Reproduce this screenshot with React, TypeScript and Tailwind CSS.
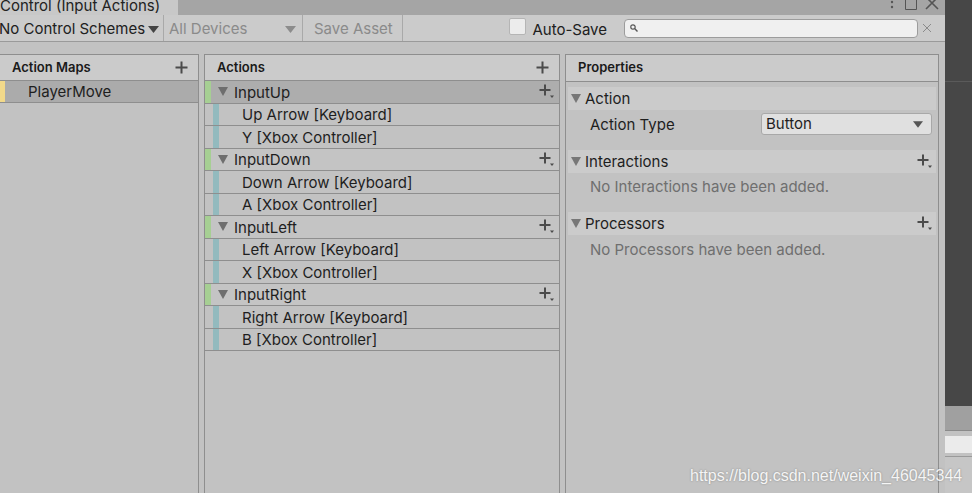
import React from 'react';

type Binding = { name: string };
type Action = { name: string; selected?: boolean; bindings: Binding[] };

const ACTIONS: Action[] = [
  { name: 'InputUp', selected: true, bindings: [{ name: 'Up Arrow [Keyboard]' }, { name: 'Y [Xbox Controller]' }] },
  { name: 'InputDown', bindings: [{ name: 'Down Arrow [Keyboard]' }, { name: 'A [Xbox Controller]' }] },
  { name: 'InputLeft', bindings: [{ name: 'Left Arrow [Keyboard]' }, { name: 'X [Xbox Controller]' }] },
  { name: 'InputRight', bindings: [{ name: 'Right Arrow [Keyboard]' }, { name: 'B [Xbox Controller]' }] },
];

const Plus = () => (
  <svg width="13" height="13" viewBox="0 0 13 13" className="shrink-0">
    <path d="M6.5 0.5v12M0.5 6.5h12" stroke="#4b4b4b" strokeWidth="2" />
  </svg>
);

// plus with the tiny dropdown caret under its right arm
const PlusMenu = () => (
  <svg width="15" height="15" viewBox="0 0 15 15" className="shrink-0">
    <path d="M6 0.5v11M0.5 6h11" stroke="#4b4b4b" strokeWidth="2" />
    <path d="M11 11.5h4l-2 2.5z" fill="#4b4b4b" />
  </svg>
);

const Tri = ({ color = '#6e6e6e' }: { color?: string }) => (
  <svg width="10" height="9" viewBox="0 0 10 9" className="shrink-0">
    <path d="M0 0h10L5 9z" fill={color} />
  </svg>
);

const Caret = ({ color = '#555', w = 11 }: { color?: string; w?: number }) => (
  <svg width={w} height="7" viewBox="0 0 11 7" className="shrink-0">
    <path d="M0 0h11L5.5 7z" fill={color} />
  </svg>
);

const PanelHeader = ({ title, plus }: { title: string; plus?: boolean }) => (
  <div className="h-[26px] flex items-center justify-between pl-[12px] pr-[10px] bg-[#cbcbcb] border-b border-[#8e8e8e] text-[13px] font-semibold text-[#1a1a1a]">
    <span>{title}</span>
    {plus && <Plus />}
  </div>
);

const Foldout = ({ title, plus }: { title: string; plus?: boolean }) => (
  <div className="h-[23px] flex items-center bg-[#cbcbcb] pl-[3px] pr-[4px] text-[15px] text-[#1e1e1e]">
    <Tri color="#777" />
    <span className="ml-[4px] flex-1 pt-[1px]">{title}</span>
    {plus && <PlusMenu />}
  </div>
);

export default function App() {
  return (
    <div className="relative w-[972px] h-[493px] flex bg-[#474747] overflow-hidden font-['Inter',sans-serif] text-[#1e1e1e]">
      {/* editor window */}
      <div className="w-[945px] h-full flex flex-col bg-[#c2c2c2]">
        {/* tab strip */}
        <div className="h-[15px] flex bg-[#a5a5a5]">
          <div className="w-[178px] bg-[#c8c8c8] text-[15px] leading-[11px] text-[#222] whitespace-nowrap overflow-hidden">
            Control (Input Actions)
          </div>
          <div className="flex-1" />
          <div className="flex items-start pr-[6px]">
            <svg width="4" height="10" viewBox="0 0 4 10"><circle cx="2" cy="2" r="1.2" fill="#555" /><circle cx="2" cy="7" r="1.2" fill="#555" /></svg>
            <svg width="12" height="10" viewBox="0 0 12 10" className="ml-[11px]"><path d="M0.5 -2h11v11.5h-11z" fill="none" stroke="#555" /></svg>
            <svg width="14" height="10" viewBox="0 0 14 10" className="ml-[8px]"><path d="M1 -3l12 12M13 -3L1 9" stroke="#555" strokeWidth="1.6" /></svg>
          </div>
        </div>

        {/* toolbar */}
        <div className="h-[27px] flex items-center bg-[#cbcbcb] border-b border-[#9a9a9a] text-[15px]">
          <div className="w-[164px] h-full flex items-center justify-between pt-[2px] pr-[4px] border-r border-[#a9a9a9] text-[#202020]">
            <span className="-ml-[1px]">No Control Schemes</span>
            <Caret color="#444" />
          </div>
          <div className="w-[139px] h-full flex items-center justify-between pt-[2px] pl-[5px] pr-[6px] border-r border-[#a9a9a9] text-[#8a8a8a]">
            <span>All Devices</span>
            <Caret color="#8c8c8c" />
          </div>
          <div className="w-[100px] h-full flex items-center pt-[2px] pl-[11px] border-r border-[#a9a9a9] text-[#8a8a8a]">
            Save Asset
          </div>
          <div className="flex-1" />
          <div className="w-[17px] h-[17px] rounded-[2px] bg-[#ececec] border border-[#b5b5b5] mb-[4px]" />
          <span className="ml-[6px] mr-[17px] mt-[4px] text-[#202020]">Auto-Save</span>
          <div className="w-[294px] h-[19px] rounded-[4px] bg-[#f0f0f0] border border-[#9c9c9c] flex items-center pl-[5px]">
            <svg width="8" height="8" viewBox="0 0 8 8"><circle cx="3" cy="3" r="2.2" fill="none" stroke="#555" strokeWidth="1.2" /><path d="M4.6 4.6L7.5 7.5" stroke="#555" strokeWidth="1.4" /></svg>
          </div>
          <svg width="10" height="10" viewBox="0 0 10 10" className="ml-[4px] mr-[13px]"><path d="M1 1l8 8M9 1L1 9" stroke="#8a8a8a" strokeWidth="1" /></svg>
        </div>

        {/* panels */}
        <div className="flex-1 flex pt-[12px]">
          {/* action maps */}
          <div className="w-[199px] flex flex-col border-t border-r border-[#8e8e8e]">
            <PanelHeader title="Action Maps" plus />
            <div className="h-[22px] flex items-center bg-[#ababab] border-b border-[#8e8e8e] text-[15px]">
              <div className="w-[5px] h-full bg-[#f2d98a]" />
              <span className="ml-[23px] pt-[2px]">PlayerMove</span>
            </div>
          </div>

          {/* actions */}
          <div className="ml-[5px] w-[356px] flex flex-col border-t border-l border-r border-[#8e8e8e]">
            <PanelHeader title="Actions" plus />
            {ACTIONS.map(a => (
              <React.Fragment key={a.name}>
                <div className={`h-[22.5px] flex items-center border-b border-[#8e8e8e] text-[15px] pr-[5px] ${a.selected ? 'bg-[#adadad]' : 'bg-[#c4c4c4]'}`}>
                  <div className="w-[6px] h-full bg-[#a6cf93]" />
                  <span className="ml-[7px]"><Tri /></span>
                  <span className="ml-[6px] flex-1 pt-[2px]">{a.name}</span>
                  <PlusMenu />
                </div>
                {a.bindings.map(b => (
                  <div key={b.name} className="h-[22.5px] flex items-center border-b border-[#8e8e8e] text-[15px]">
                    <div className="ml-[8px] w-[6px] h-full bg-[#93babe]" />
                    <span className="ml-[23px] pt-[2px]">{b.name}</span>
                  </div>
                ))}
              </React.Fragment>
            ))}
          </div>

          {/* properties */}
          <div className="ml-[5px] w-[374px] flex flex-col border-t border-l border-r border-[#8e8e8e]">
            <div className="h-[27px] flex items-center pl-[12px] bg-[#cbcbcb] border-b border-[#8e8e8e] text-[13px] font-semibold text-[#1a1a1a]">
              Properties
            </div>
            <div className="flex flex-col pt-[5px] pl-[2px] pr-[2px]">
              <Foldout title="Action" />
              <div className="h-[26px] mt-[1px] flex items-center text-[15px]">
                <span className="ml-[22px] w-[171px] pt-[2px]">Action Type</span>
                <div className="w-[171px] h-[22px] rounded-[3px] bg-[#e0e0e0] border border-[#a8a8a8] flex items-center justify-between pl-[4px] pr-[8px]">
                  <span>Button</span>
                  <Caret color="#555" w={10} />
                </div>
              </div>
              <div className="h-[13px]" />
              <Foldout title="Interactions" plus />
              <div className="h-[27px] flex items-center pl-[22px] pt-[2px] text-[15px] text-[#6f6f6f]">No Interactions have been added.</div>
              <div className="h-[12px]" />
              <Foldout title="Processors" plus />
              <div className="h-[28px] flex items-center pl-[22px] pt-[2px] text-[15px] text-[#6f6f6f]">No Processors have been added.</div>
            </div>
          </div>
        </div>
      </div>

      {/* neighbouring editor pane */}
      <div className="flex-1 flex flex-col">
        <div className="h-[82px] border-b border-[#5a5a5a]" />
        <div className="h-[324px]" />
        <div className="h-[25px] bg-[#a0a0a0] border-b border-[#8a8a8a]" />
        <div className="h-[5px] bg-[#c2c2c2]" />
        <div className="h-[17px] bg-[#ebebeb]" />
        <div className="h-[4px] bg-[#c2c2c2] border-b border-[#9a9a9a]" />
        <div className="flex-1 bg-[#c6c6c6]" />
      </div>

      <div className="absolute left-[690px] top-[464px] text-[16px] text-white/90 font-['Liberation_Sans',Arial,sans-serif] [text-shadow:0_0_2px_rgba(0,0,0,0.35)] whitespace-nowrap">
        https://blog.csdn.net/weixin_46045344
      </div>
    </div>
  );
}
